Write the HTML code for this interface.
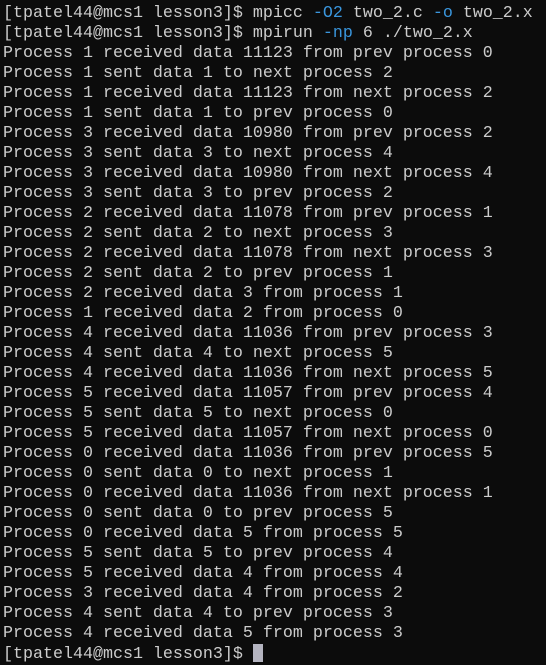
<!DOCTYPE html>
<html><head><meta charset="utf-8"><style>
html,body{margin:0;padding:0;background:#0c0c0c;width:546px;height:665px;overflow:hidden}
pre{margin:0;padding:4px 0 0 3px;font-family:"Liberation Mono",monospace;font-size:16.67px;line-height:20px;color:#cccccc;white-space:pre}
.b{color:#3a96dd}
.c{display:inline-block;width:10px;height:18px;background:#b4b4c0;vertical-align:-4px}
</style></head><body><pre>[tpatel44@mcs1 lesson3]$ mpicc <span class="b">-O2</span> two_2.c <span class="b">-o</span> two_2.x
[tpatel44@mcs1 lesson3]$ mpirun <span class="b">-np</span> 6 ./two_2.x
Process 1 received data 11123 from prev process 0
Process 1 sent data 1 to next process 2
Process 1 received data 11123 from next process 2
Process 1 sent data 1 to prev process 0
Process 3 received data 10980 from prev process 2
Process 3 sent data 3 to next process 4
Process 3 received data 10980 from next process 4
Process 3 sent data 3 to prev process 2
Process 2 received data 11078 from prev process 1
Process 2 sent data 2 to next process 3
Process 2 received data 11078 from next process 3
Process 2 sent data 2 to prev process 1
Process 2 received data 3 from process 1
Process 1 received data 2 from process 0
Process 4 received data 11036 from prev process 3
Process 4 sent data 4 to next process 5
Process 4 received data 11036 from next process 5
Process 5 received data 11057 from prev process 4
Process 5 sent data 5 to next process 0
Process 5 received data 11057 from next process 0
Process 0 received data 11036 from prev process 5
Process 0 sent data 0 to next process 1
Process 0 received data 11036 from next process 1
Process 0 sent data 0 to prev process 5
Process 0 received data 5 from process 5
Process 5 sent data 5 to prev process 4
Process 5 received data 4 from process 4
Process 3 received data 4 from process 2
Process 4 sent data 4 to prev process 3
Process 4 received data 5 from process 3
[tpatel44@mcs1 lesson3]$ <span class="c"></span></pre></body></html>
